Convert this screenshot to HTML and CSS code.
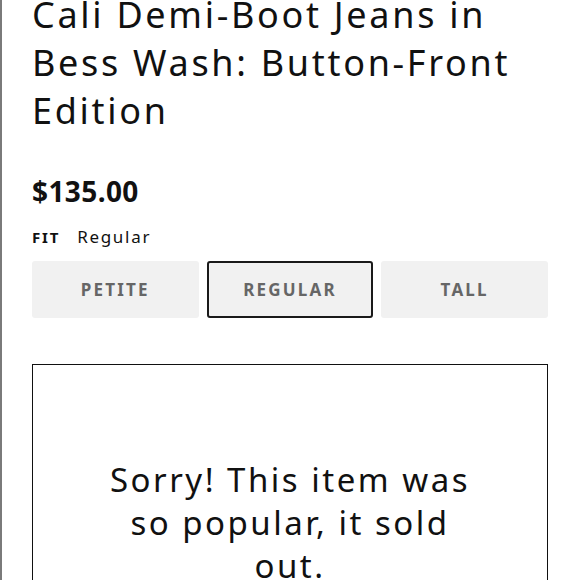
FILE: index.html
```html
<!DOCTYPE html>
<html lang="en">
<head>
    <meta charset="UTF-8">
    <meta name="viewport" content="width=device-width, initial-scale=1.0">
    <title>Cali Demi-Boot Jeans in Bess Wash: Button-Front Edition</title>
    <link rel="stylesheet" href="styles.css">
</head>
<body>
    <div class="product">
        <h1 class="product-title">Cali Demi-Boot Jeans in Bess Wash: Button-Front Edition</h1>
        <div class="price">$135.00</div>
        <div class="fit-label">
            <span class="fit-key">FIT</span>
            <span class="fit-value">Regular</span>
        </div>
        <div class="fit-options">
            <button class="fit-btn">PETITE</button>
            <button class="fit-btn selected">REGULAR</button>
            <button class="fit-btn">TALL</button>
        </div>
        <div class="sold-out">
            <p>Sorry! This item was so popular, it sold out.</p>
        </div>
    </div>
</body>
</html>
```

FILE: styles.css
```css
body {
    margin: 0;
    font-family: 'Noto Sans', 'Open Sans', sans-serif;
    color: #111;
    background-color: #fff;
    border-left: 2px solid #7a7a7a;
    min-height: 100vh;
    box-sizing: border-box;
    overflow: hidden;
}
.product {
    padding: 0 30px 0 30px;
    width: 516px;
}
.product-title {
    font-size: 36px;
    font-weight: 400;
    line-height: 48px;
    letter-spacing: 2.7px;
    margin: -9px 0 0;
}
.price {
    font-size: 28px;
    font-weight: 700;
    line-height: 34px;
    letter-spacing: 0.4px;
    margin-top: 39px;
}
.fit-label {
    margin-top: 17px;
    font-size: 17px;
    line-height: 24px;
    display: flex;
    gap: 17px;
    align-items: baseline;
}
.fit-key {
    font-weight: 700;
    font-size: 15px;
    letter-spacing: 1.8px;
}
.fit-value {
    letter-spacing: 1.7px;
}
.fit-options {
    display: flex;
    gap: 8px;
    margin-top: 12px;
}
.fit-btn {
    flex: 1;
    height: 57px;
    background-color: #f1f1f1;
    border: 2px solid transparent;
    border-radius: 3px;
    font-family: inherit;
    font-size: 17px;
    font-weight: 700;
    letter-spacing: 2.2px;
    color: #666;
    cursor: pointer;
}
.fit-btn.selected {
    border-color: #1a1a1a;
}
.sold-out {
    margin-top: 46px;
    border: 1.5px solid #111;
    height: 300px;
    box-sizing: border-box;
    display: flex;
    justify-content: center;
    padding: 0 68px;
}
.sold-out p {
    margin: 93px 0 0;
    font-size: 33px;
    line-height: 43px;
    letter-spacing: 2.5px;
    text-align: center;
}
```
